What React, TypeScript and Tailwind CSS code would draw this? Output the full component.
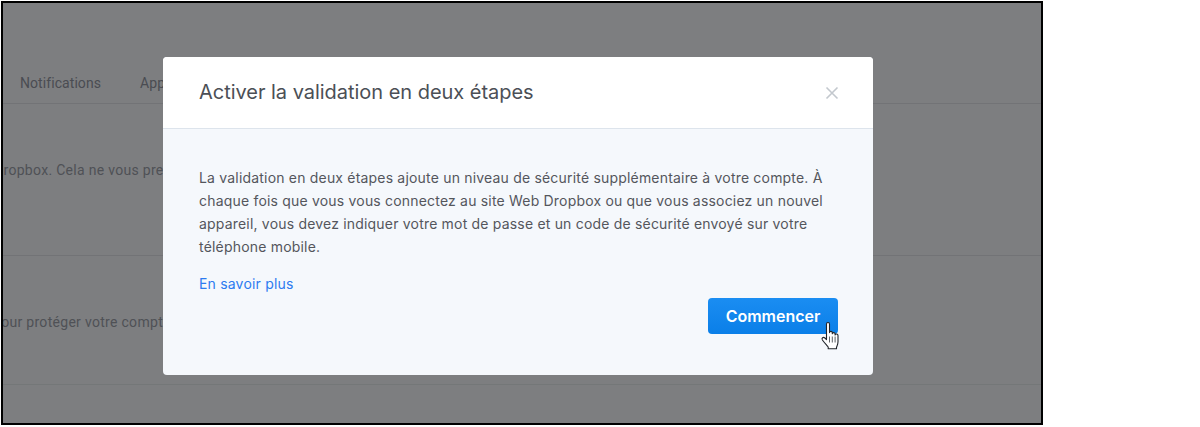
function HandCursor() {
  return (
    <svg width="22" height="30" viewBox="0 0 22 30" className="absolute left-[112px] top-[23px]">
      <path
        d="M6.5 3c0-2 3-2 3 0v8.6c0-1.7 2.8-1.7 2.8 0v1.2c0-1.6 2.8-1.6 2.8 0v1.2c0-1.5 2.9-1.4 2.9 0.4v6.4c0 2.6-0.8 3.8-1.5 5.4v1.6H8.2v-1.8c-1.4-1.8-3.8-4.2-5.8-7-1.2-1.8 0.9-3.5 2.5-2l1.6 1.6V3z"
        fill="#fff"
        stroke="#20242a"
        strokeWidth="1.1"
        strokeLinejoin="round"
      />
      <path d="M9.5 15.5v6M12.3 15.5v6M15.1 15.5v6" stroke="#4a4f55" strokeWidth="0.9" fill="none" />
    </svg>
  );
}

export default function App() {
  return (
    <div className="w-[1200px] h-[427px] bg-white overflow-hidden font-['Roboto',sans-serif]">
      <div className="relative ml-px mt-px w-[1042px] h-[424px] border-2 border-black bg-[#7d7e80] overflow-hidden">
        <div className="h-[101px] border-b border-[#727376] flex items-end gap-[39px] pl-[17px] pb-[10px] text-[14px] leading-[20px] text-[#4a4c52] tracking-[0.07px]">
          <span>Notifications</span>
          <span>Applications</span>
        </div>
        <div className="h-[152px] border-b border-[#727376] pt-[56px] text-[14px] leading-[20px] text-[#4f5156] whitespace-nowrap tracking-[0.3px]">
          <p className="-ml-[9px]">Dropbox. Cela ne vous prendra que quelques minutes.</p>
        </div>
        <div className="h-[129px] border-b border-[#747778] pt-[56px] text-[14px] leading-[20px] text-[#4f5156] whitespace-nowrap tracking-[0.3px]">
          <p className="-ml-[10px]">pour protéger votre compte.</p>
        </div>

        <div className="absolute left-[160px] top-[54px] w-[710px] rounded-[4px] overflow-hidden bg-[#f5f8fc] font-['Inter',sans-serif]">
          <div className="h-[72px] bg-white border-b border-[#dde4ec] flex items-center justify-between pl-[36px] pr-[34px]">
            <h1 className="text-[20px] leading-[28px] font-normal text-[#4b4f56] tracking-[-0.03px] -mt-[2px]">
              Activer la validation en deux étapes
            </h1>
            <svg width="14" height="14" viewBox="0 0 14 14">
              <path d="M1.5 1.5l11 11M12.5 1.5l-11 11" stroke="#c3c8ce" strokeWidth="1.6" fill="none" />
            </svg>
          </div>
          <div className="h-[246px] pl-[36px] pr-[35px] pt-[37px]">
            <p className="text-[14px] leading-[23px] text-[#54565c] tracking-[0.19px] w-[640px]">
              La validation en deux étapes ajoute un niveau de sécurité supplémentaire à votre compte. À<br />
              chaque fois que vous vous connectez au site Web Dropbox ou que vous associez un nouvel<br />
              appareil, vous devez indiquer votre mot de passe et un code de sécurité envoyé sur votre<br />
              téléphone mobile.
            </p>
            <a className="block mt-[16px] text-[14px] leading-[20px] text-[#2c7bf0] tracking-[0.19px]">En savoir plus</a>
            <div className="flex justify-end mt-[4px]">
              <button className="relative w-[130px] h-[36px] rounded-[4px] bg-linear-to-b from-[#1a8df2] to-[#0a7fe8] text-white text-[16px] font-semibold">
                Commencer
                <HandCursor />
              </button>
            </div>
          </div>
        </div>
      </div>
    </div>
  );
}
